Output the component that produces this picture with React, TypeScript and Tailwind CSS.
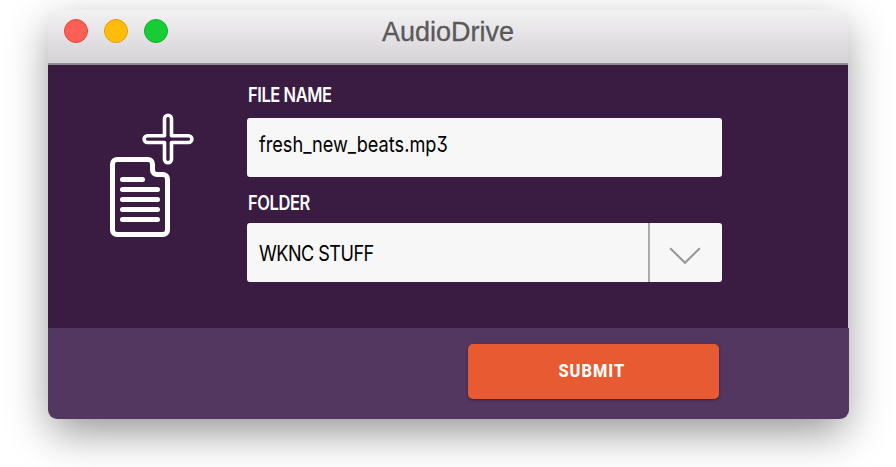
import React from "react";

function TrafficLight({ className }: { className: string }) {
  return <span className={`size-6 rounded-full border ${className}`} />;
}

function TitleBar() {
  return (
    <header className="grid h-[55px] grid-cols-[1fr_auto_1fr] items-start rounded-t-[8px] border-b-2 border-[#8e8b8e] bg-gradient-to-b from-[#f3f2f3] to-[#d5d2d5] px-4">
      <div className="flex gap-4 pt-[9px]">
        <TrafficLight className="border-[#e2463f] bg-[#ff5f55]" />
        <TrafficLight className="border-[#e0a00f] bg-[#ffbd09]" />
        <TrafficLight className="border-[#14ae2c] bg-[#17cc35]" />
      </div>
      <h1 className="pt-[6px] font-['Liberation_Sans',sans-serif] text-[27px] leading-[32px] text-[#5a595a] [-webkit-text-stroke:0.3px_#5a595a]">
        AudioDrive
      </h1>
    </header>
  );
}

function FileIcon() {
  return (
    <svg className="mt-[47px] ml-[60px] h-[126px] w-[88px] shrink-0" viewBox="108 112 88 126" fill="none" stroke="white" strokeLinecap="round" strokeLinejoin="round">
      <path d="M164.5 135.7V118.7A3.5 3.5 0 0 1 171.5 118.7V135.7H188.5A3.4 3.4 0 0 1 188.5 142.5H171.5V159.3A3.5 3.5 0 0 1 164.5 159.3V142.5H147.5A3.4 3.4 0 0 1 147.5 135.7Z" strokeWidth="3.6" />
      <path d="M117 159.5H148A4.5 4.5 0 0 1 152.5 164V170A4.5 4.5 0 0 0 157 174.5H163A4.5 4.5 0 0 1 167.5 179V230A4.5 4.5 0 0 1 163 234.5H117A4.5 4.5 0 0 1 112.5 230V164A4.5 4.5 0 0 1 117 159.5Z" strokeWidth="5" />
      <path d="M122.5 179.5H142.5M122.5 189.5H157.5M122.5 199.5H157.5M122.5 209.5H157.5M122.5 219.5H157.5" strokeWidth="5" />
    </svg>
  );
}

function Label({ children }: { children: React.ReactNode }) {
  return (
    <span className="block w-max origin-left scale-x-[0.845] text-[19.5px] leading-6 font-semibold tracking-[-0.5px] whitespace-nowrap text-white">
      {children}
    </span>
  );
}

function Value({ className, children }: { className: string; children: React.ReactNode }) {
  return (
    <span className={`block w-max origin-left text-[22px] leading-7 whitespace-nowrap text-black [font-feature-settings:'cv09'] ${className}`}>
      {children}
    </span>
  );
}

export default function App() {
  return (
    <div className="h-[467px] w-[896px] overflow-hidden bg-white pt-[10px] pl-12 font-['Inter',sans-serif]">
      <main className="h-[409px] w-[800px] rounded-[9px] shadow-[0_15px_44px_-3px_rgba(0,0,0,0.44)]">
        <TitleBar />
        <section className="flex h-[263px] bg-[#3a1c42]">
          <FileIcon />
          <div className="ml-[51px] w-[475px] pt-[18px]">
            <div className="pl-px"><Label>FILE NAME</Label></div>
            <div className="mt-[11px] h-[59px] rounded-[3px] bg-[#f7f7f7] pt-[12px] pl-3">
              <Value className="scale-x-[0.825]">fresh_new_beats.mp3</Value>
            </div>
            <div className="mt-[14px] pl-px"><Label>FOLDER</Label></div>
            <div className="mt-[8px] flex h-[59px] rounded-[3px] bg-[#f7f7f7]">
              <div className="w-[401px] pt-[16px] pl-3"><Value className="scale-x-[0.82] tracking-[-0.6px]">WKNC STUFF</Value></div>
              <div className="flex w-[74px] justify-center border-l-2 border-[#aaa] pt-[24px] pr-[2px]">
                <svg className="h-[18px] w-[32px]" viewBox="0 0 32 18" fill="none" stroke="#969696" strokeWidth="2">
                  <path d="M1.2 1.2L16 15.8L30.8 1.2" />
                </svg>
              </div>
            </div>
          </div>
        </section>
        <footer className="h-[91px] w-[801px] rounded-b-[9px] bg-[#533761] pt-4 pl-[420px]">
          <button className="flex h-[55px] w-[251px] justify-center rounded-[5px] bg-[#e85a32] pt-[15px] pr-[3px] font-['Roboto',sans-serif] text-[19px] leading-6 font-extrabold text-white shadow-[0_1px_3px_rgba(0,0,0,0.4)]">
            <span className="block scale-x-[0.86] tracking-[1.2px]">SUBMIT</span>
          </button>
        </footer>
      </main>
    </div>
  );
}
